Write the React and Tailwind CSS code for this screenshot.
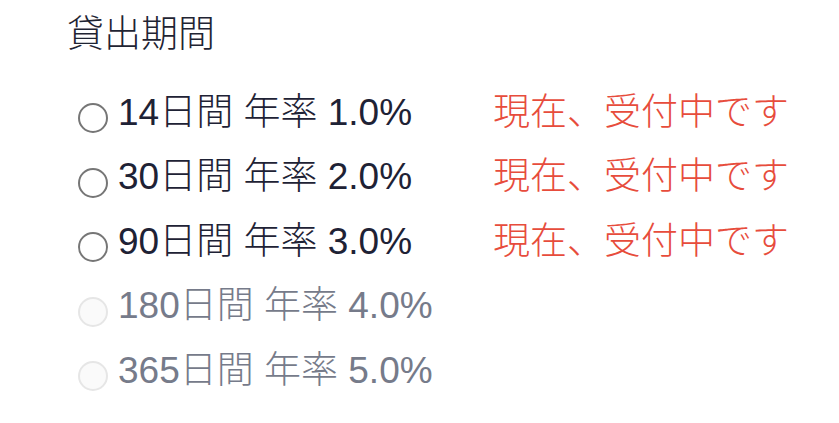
import React from 'react';

const periods = [
  { days: 14, rate: '1.0%', open: true },
  { days: 30, rate: '2.0%', open: true },
  { days: 90, rate: '3.0%', open: true },
  { days: 180, rate: '4.0%', open: false },
  { days: 365, rate: '5.0%', open: false },
];

const App = () => {
  return (
    <div
      className="min-h-screen bg-white pl-[67px] pt-[10px]"
      style={{ fontFamily: '"Liberation Sans", "Noto Sans CJK JP", sans-serif' }}
    >
      <h2 className="text-[37px] leading-[50px] text-[#1f2433] font-light">貸出期間</h2>

      <div className="mt-[20px] flex flex-col">
        {periods.map((p) => (
          <label key={p.days} className="flex items-center h-[64.5px] font-light">
            <span
              className={`mt-[12px] ml-[11px] mr-[10px] w-[30px] h-[30px] rounded-full border-[2.5px] ${
                p.open ? 'border-[#767676] bg-white' : 'border-[#e6e6e6] bg-[#fafafa]'
              }`}
            ></span>
            <span
              className={`w-[375px] text-[37px] ${p.open ? 'text-[#1e2235]' : 'text-[#767b8a]'}`}
            >
              {p.days}日間 年率 {p.rate}
            </span>
            {p.open && <span className="text-[37px] text-[#e74c3c]">現在、受付中です</span>}
          </label>
        ))}
      </div>
    </div>
  );
};

export default App;
